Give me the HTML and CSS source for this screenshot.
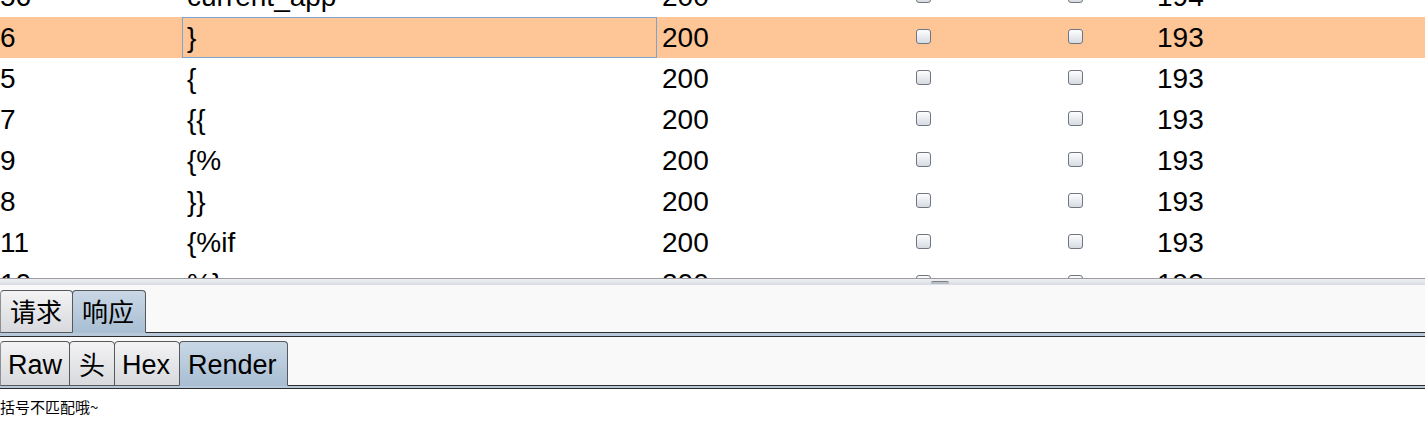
FILE: index.html
```html
<!DOCTYPE html>
<html lang="zh">
<head>
<meta charset="utf-8">
<link rel="stylesheet" href="styles.css">
</head>
<body>
<div class="app">
  <div class="table-viewport">
    <table class="grid">
      <colgroup>
        <col class="c1"><col class="c2"><col class="c3"><col class="c4"><col class="c5"><col class="c6">
      </colgroup>
      <tbody>
        <tr><td class="num">56</td><td class="payload">current_app</td><td class="status">200</td><td class="chk"><span class="box"></span></td><td class="chk"><span class="box"></span></td><td class="len">194</td></tr>
        <tr class="selected"><td class="num">6</td><td class="payload focus">}</td><td class="status">200</td><td class="chk"><span class="box"></span></td><td class="chk"><span class="box"></span></td><td class="len">193</td></tr>
        <tr><td class="num">5</td><td class="payload">{</td><td class="status">200</td><td class="chk"><span class="box"></span></td><td class="chk"><span class="box"></span></td><td class="len">193</td></tr>
        <tr><td class="num">7</td><td class="payload">{{</td><td class="status">200</td><td class="chk"><span class="box"></span></td><td class="chk"><span class="box"></span></td><td class="len">193</td></tr>
        <tr><td class="num">9</td><td class="payload">{%</td><td class="status">200</td><td class="chk"><span class="box"></span></td><td class="chk"><span class="box"></span></td><td class="len">193</td></tr>
        <tr><td class="num">8</td><td class="payload">}}</td><td class="status">200</td><td class="chk"><span class="box"></span></td><td class="chk"><span class="box"></span></td><td class="len">193</td></tr>
        <tr><td class="num">11</td><td class="payload">{%if</td><td class="status">200</td><td class="chk"><span class="box"></span></td><td class="chk"><span class="box"></span></td><td class="len">193</td></tr>
        <tr><td class="num">10</td><td class="payload">%}</td><td class="status">200</td><td class="chk"><span class="box"></span></td><td class="chk"><span class="box"></span></td><td class="len">193</td></tr>
      </tbody>
    </table>
  </div>
  <div class="splitter"><span class="grip"></span></div>
  <div class="panel">
    <div class="tabs tabs-main">
      <div class="tab tab-cjk">请求</div>
      <div class="tab tab-cjk active">响应</div>
    </div>
    <div class="tab-body main-body">
      <div class="tabs tabs-sub">
        <div class="tab">Raw</div>
        <div class="tab tab-cjk">头</div>
        <div class="tab">Hex</div>
        <div class="tab active">Render</div>
      </div>
      <div class="tab-body sub-body">
        <div class="render">括号不匹配哦~</div>
      </div>
    </div>
  </div>
</div>
</body>
</html>
```

FILE: styles.css
```css
* { box-sizing: border-box; }
html, body {
  margin: 0;
  padding: 0;
  width: 1425px;
  height: 443px;
  overflow: hidden;
  background: #ffffff;
}
.app {
  width: 1425px;
  height: 443px;
  display: flex;
  flex-direction: column;
  font-family: "Liberation Sans", Arial, "Noto Sans CJK SC", sans-serif;
  color: #000;
}
.table-viewport {
  height: 278px;
  overflow: hidden;
  background: #fff;
  flex: none;
}
.grid {
  table-layout: fixed;
  border-collapse: collapse;
  width: 1425px;
  margin-top: -24px;
  font-size: 28px;
}
.c1 { width: 182px; }
.c2 { width: 475px; }
.c3 { width: 190px; }
.c4 { width: 152px; }
.c5 { width: 152px; }
.c6 { width: 274px; }
.grid td {
  height: 41px;
  padding: 0;
  line-height: 41px;
  white-space: nowrap;
  overflow: hidden;
  vertical-align: middle;
}
.grid td.num { padding-left: 0; }
.grid td.payload { padding-left: 5px; }
.grid td.status { padding-left: 5px; }
.grid td.len { padding-left: 6px; }
.grid td.chk { text-align: center; line-height: 0; }
.grid tr.selected td { background: #fec597; }
.grid td.focus { box-shadow: inset 0 0 0 1px #7ea3cd; }
.box {
  display: inline-block;
  width: 15px;
  height: 15px;
  border: 1px solid #6f7680;
  border-radius: 3px;
  background: linear-gradient(#fdfdfe, #d6dbe2);
  vertical-align: middle;
  position: relative;
  top: -1px;
}
.splitter {
  flex: none;
  height: 7px;
  border-top: 1px solid #9a9ca0;
  background: linear-gradient(#eef0f3, #d7dbe1);
  display: flex;
  padding-left: 931px;
}
.grip {
  display: block;
  width: 18px;
  height: 3px;
  margin-top: 2px;
  border-radius: 2px 2px 0 0;
  border-top: 1px solid #7f848b;
  background: #b9bec6;
}
.panel {
  flex: 1;
  background: #f9f9f9;
  padding-top: 4px;
  display: flex;
  flex-direction: column;
}
.tabs {
  display: flex;
  align-items: flex-end;
  border-bottom: 1px solid #2c2c2c;
  flex: none;
}
.tabs-main { height: 44px; }
.tabs-sub { height: 46px; }
.tab {
  height: 100%;
  margin-bottom: -1px;
  border: 1px solid #55595e;
  border-radius: 4px 4px 0 0;
  background: linear-gradient(#f3f3f4, #d8d9dd);
  font-size: 27px;
  line-height: 46px;
  padding: 0 7px;
  color: #000;
  margin-right: -1px;
  white-space: nowrap;
  overflow: hidden;
}
.tab:first-child { border-left-color: #8c8f94; }
.tab-cjk {
  font-family: "Noto Sans CJK SC", sans-serif;
  font-size: 26px;
  padding: 0 9px;
  line-height: 40px;
}
.tabs-sub .tab-cjk { line-height: 44px; }
.tab.active {
  background: linear-gradient(#c9d7e5, #a9bed3);
  border-bottom-color: #a9bed3;
  position: relative;
  z-index: 1;
}
.tabs-main .tab { width: 73px; }
.tabs-main .tab.active { width: 74px; }
.tabs-sub .tab:nth-child(1) { width: 70px; }
.tabs-sub .tab:nth-child(2) { width: 46px; }
.tabs-sub .tab:nth-child(3) { width: 66px; }
.tabs-sub .tab:nth-child(4) { width: 109px; padding: 0 8px; }
.tab-body {
  flex: 1;
  display: flex;
  flex-direction: column;
  border-top: 3px solid #b6c8da;
  box-shadow: inset 0 1px 0 #2c2c2c;
}
.main-body { padding-top: 4px; }
.sub-body {
  border-top-width: 2px;
  background: #ffffff;
  padding-top: 9px;
}
.render {
  font-family: "Noto Sans CJK SC", sans-serif;
  font-size: 15px;
  line-height: 20px;
  color: #000;
}
```
